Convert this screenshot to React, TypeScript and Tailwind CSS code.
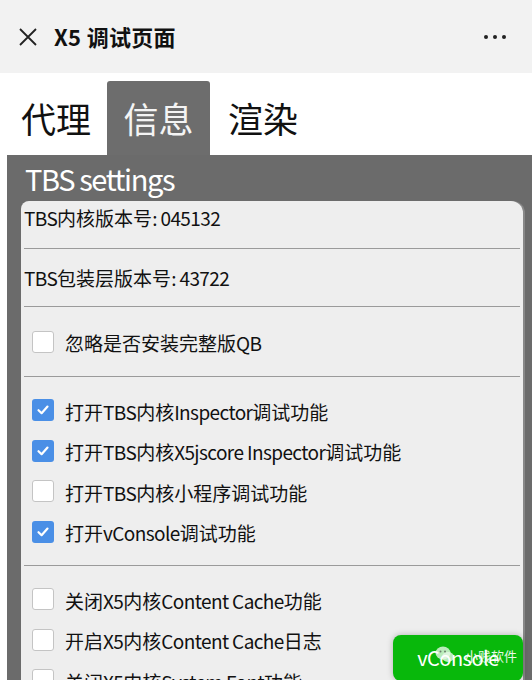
import React from "react";

const font = { fontFamily: '"Noto Sans CJK SC", "Noto Sans", sans-serif' };

function Txt({ s }: { s: string }) {
  const parts = s.split(/([A-Za-z0-9:. ]+)/).filter((p) => p.length > 0);
  return (
    <>
      {parts.map((p, i) =>
        /^[A-Za-z0-9:. ]+$/.test(p) ? (
          <span key={i} className="tracking-[-0.6px]">{p}</span>
        ) : (
          <span key={i}>{p}</span>
        )
      )}
    </>
  );
}

function Check({ checked }: { checked: boolean }) {
  if (checked) {
    return (
      <div className="w-[22px] h-[22px] rounded-[3px] bg-[#4a8fe6] flex items-center justify-center shrink-0">
        <svg width="14" height="14" viewBox="0 0 14 14">
          <path d="M2.5 7.2 L5.6 10.2 L11.5 3.6" fill="none" stroke="#fff" strokeWidth="2.2" strokeLinecap="round" strokeLinejoin="round" />
        </svg>
      </div>
    );
  }
  return <div className="w-[22px] h-[22px] rounded-[3px] bg-white border border-[#c4c4c4] shrink-0" />;
}

function CRow({ label, checked }: { label: string; checked: boolean }) {
  return (
    <div className="h-[40.5px] flex items-center pl-[11px] gap-[11px]">
      <Check checked={checked} />
      <span className="text-[19px] leading-[22px] text-[#111] whitespace-nowrap pt-[3px]">
        <Txt s={label} />
      </span>
    </div>
  );
}

function Hr() {
  return <div className="h-px bg-[#9a9a9a] mx-[3px]" />;
}

export default function App() {
  return (
    <div className="w-[532px] h-[680px] overflow-hidden bg-white relative" style={font}>
      {/* header */}
      <div className="h-[73px] bg-[#f2f2f2] flex items-center px-[18px]">
        <svg width="20" height="20" viewBox="0 0 20 20" className="shrink-0">
          <path d="M2 2 L18 18 M18 2 L2 18" stroke="#222" strokeWidth="1.8" />
        </svg>
        <span className="ml-[16px] text-[22px] font-bold text-[#111] tracking-[0.3px]">X5 调试页面</span>
        <div className="ml-auto flex gap-[5px] mr-[8px]">
          <span className="w-[4px] h-[4px] rounded-full bg-[#222]" />
          <span className="w-[4px] h-[4px] rounded-full bg-[#222]" />
          <span className="w-[4px] h-[4px] rounded-full bg-[#222]" />
        </div>
      </div>
      {/* tabs */}
      <div className="pt-[8px] pl-[5px] flex">
        <div className="w-[102px] h-[74px] flex items-center justify-center text-[35px] text-[#111]">代理</div>
        <div className="w-[103px] h-[74px] flex items-center justify-center text-[35px] text-[#f4f4f4] bg-[#6d6d6d] rounded-t-[3px]">信息</div>
        <div className="w-[106px] h-[74px] flex items-center justify-center text-[35px] text-[#111]">渲染</div>
      </div>
      {/* panel */}
      <div className="ml-[7px] bg-[#6b6b6b] h-[600px] pr-[9px]">
        <div className="pl-[18px] h-[46px] flex items-center text-[29px] text-white leading-none tracking-[-1.4px]">TBS settings</div>
        <div className="ml-[14px] bg-[#eeeeee] rounded-tr-[12px] rounded-tl-[8px] shadow-[2px_0_0_#888]">
          <div className="h-[47px] pl-[3px] pt-[6px] text-[19px] leading-[22px] text-[#111]">
            <Txt s="TBS内核版本号: 045132" />
          </div>
          <Hr />
          <div className="h-[57px] pl-[3px] flex items-center text-[19px] leading-[22px] text-[#111]">
            <Txt s="TBS包装层版本号: 43722" />
          </div>
          <Hr />
          <div className="h-[69px] flex items-center pl-[11px] gap-[11px]">
            <Check checked={false} />
            <span className="text-[19px] leading-[22px] text-[#111] pt-[3px]">
              <Txt s="忽略是否安装完整版QB" />
            </span>
          </div>
          <Hr />
          <div className="pt-[13px] pb-[13px]">
            <CRow checked label="打开TBS内核Inspector调试功能" />
            <CRow checked label="打开TBS内核X5jscore Inspector调试功能" />
            <CRow checked={false} label="打开TBS内核小程序调试功能" />
            <CRow checked label="打开vConsole调试功能" />
          </div>
          <Hr />
          <div className="pt-[13px]">
            <CRow checked={false} label="关闭X5内核Content Cache功能" />
            <CRow checked={false} label="开启X5内核Content Cache日志" />
            <CRow checked={false} label="关闭X5内核System Font功能" />
          </div>
        </div>
      </div>
      {/* vConsole button */}
      <div className="absolute left-[393px] top-[635px] w-[130px] h-[46px] rounded-[8px] bg-[#08b80b] flex items-center justify-center shadow-[0_0_6px_rgba(0,0,0,0.25)]">
        <span className="text-[20px] text-white leading-none tracking-[-0.5px]">vConsole</span>
        <div className="absolute left-[42px] top-[10px] flex items-center opacity-90 whitespace-nowrap">
          <svg width="20" height="20" viewBox="0 0 20 20">
            <ellipse cx="8" cy="8" rx="7.5" ry="6.5" fill="#fff" fillOpacity="0.8" />
            <ellipse cx="13" cy="12" rx="6" ry="5" fill="#fff" fillOpacity="0.8" />
            <circle cx="5.5" cy="6.5" r="1" fill="#777" />
            <circle cx="10" cy="6.5" r="1" fill="#777" />
          </svg>
          <span className="text-[13px] text-white leading-none ml-[10px]">小贱软件</span>
        </div>
      </div>
    </div>
  );
}
